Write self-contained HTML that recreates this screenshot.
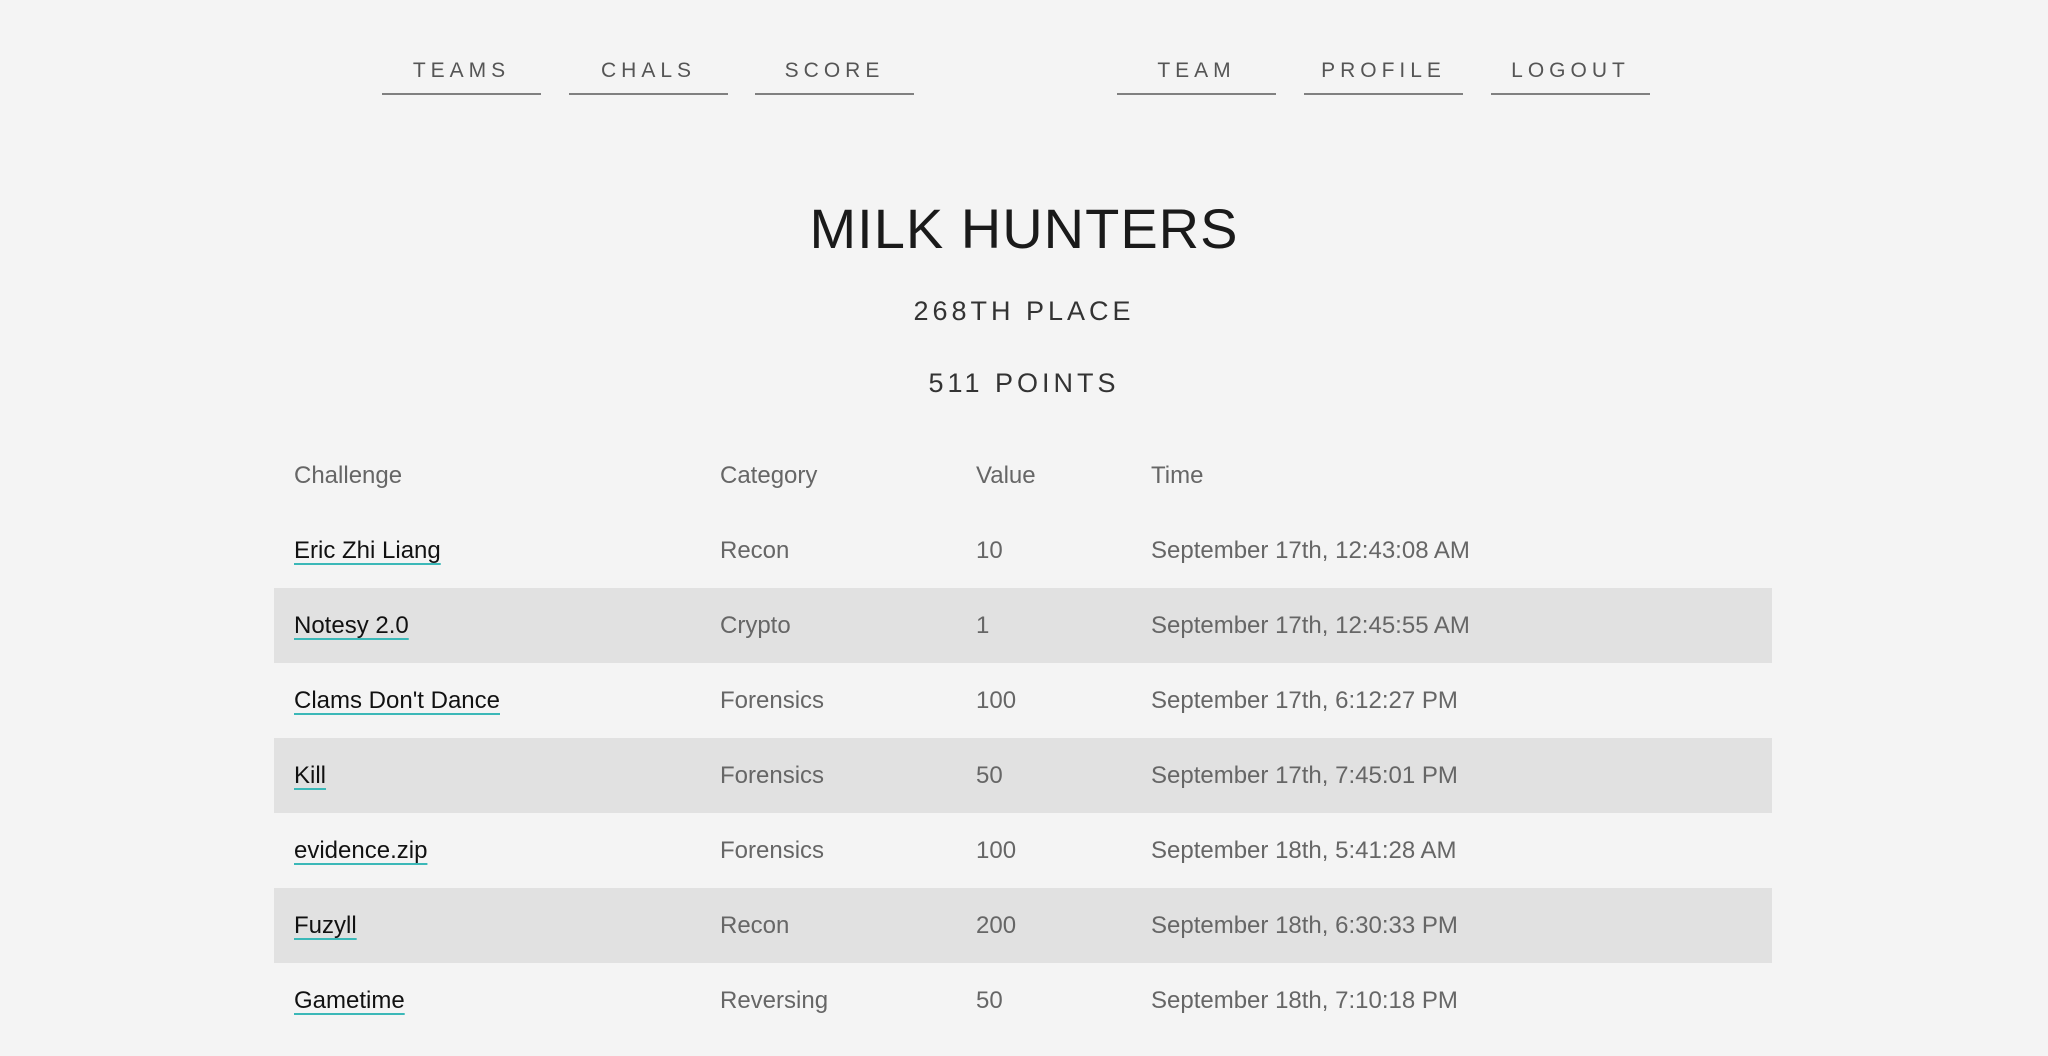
<!DOCTYPE html>
<html><head><meta charset="utf-8"><style>
html,body{margin:0;padding:0;background:#f4f4f4;width:2048px;height:1056px;overflow:hidden;font-family:"Liberation Sans",sans-serif}
.nav a{position:absolute;top:51px;width:159px;height:42px;border-bottom:2px solid #808080;text-align:center;font-size:21px;letter-spacing:5px;color:#555;line-height:40px;text-decoration:none}
.c{position:absolute;left:0;width:2048px;text-align:center;color:#222}
.row{position:absolute;left:274px;width:1498px;height:75px;font-size:24px;color:#666}
.row span{position:absolute;top:0;line-height:75px}
.band{background:#e1e1e1}
.l{color:#111;text-decoration:underline;text-decoration-color:#3bb8b8;text-decoration-thickness:2px;text-underline-offset:5px}
</style></head><body>
<div class="nav">
<a style="left:382px">TEAMS</a><a style="left:569px">CHALS</a><a style="left:755px">SCORE</a>
<a style="left:1117px">TEAM</a><a style="left:1304px">PROFILE</a><a style="left:1491px">LOGOUT</a>
</div>
<div class="c" style="top:194px;font-size:56px;line-height:70px;letter-spacing:1px;color:#1a1a1a">MILK HUNTERS</div>
<div class="c" style="top:293px;font-size:27px;line-height:36px;letter-spacing:4px;color:#333">268TH PLACE</div>
<div class="c" style="top:365px;font-size:27px;line-height:36px;letter-spacing:4px;color:#333">511 POINTS</div>

<div class="row" style="top:438px"><span style="left:20px">Challenge</span><span style="left:446px">Category</span><span style="left:702px">Value</span><span style="left:877px">Time</span></div>
<div class="row" style="top:513px"><span style="left:20px" class="l">Eric Zhi Liang</span><span style="left:446px">Recon</span><span style="left:702px">10</span><span style="left:877px">September 17th, 12:43:08 AM</span></div>
<div class="row band" style="top:588px"><span style="left:20px" class="l">Notesy 2.0</span><span style="left:446px">Crypto</span><span style="left:702px">1</span><span style="left:877px">September 17th, 12:45:55 AM</span></div>
<div class="row" style="top:663px"><span style="left:20px" class="l">Clams Don't Dance</span><span style="left:446px">Forensics</span><span style="left:702px">100</span><span style="left:877px">September 17th, 6:12:27 PM</span></div>
<div class="row band" style="top:738px"><span style="left:20px" class="l">Kill</span><span style="left:446px">Forensics</span><span style="left:702px">50</span><span style="left:877px">September 17th, 7:45:01 PM</span></div>
<div class="row" style="top:813px"><span style="left:20px" class="l">evidence.zip</span><span style="left:446px">Forensics</span><span style="left:702px">100</span><span style="left:877px">September 18th, 5:41:28 AM</span></div>
<div class="row band" style="top:888px"><span style="left:20px" class="l">Fuzyll</span><span style="left:446px">Recon</span><span style="left:702px">200</span><span style="left:877px">September 18th, 6:30:33 PM</span></div>
<div class="row" style="top:963px"><span style="left:20px" class="l">Gametime</span><span style="left:446px">Reversing</span><span style="left:702px">50</span><span style="left:877px">September 18th, 7:10:18 PM</span></div>
</body></html>
